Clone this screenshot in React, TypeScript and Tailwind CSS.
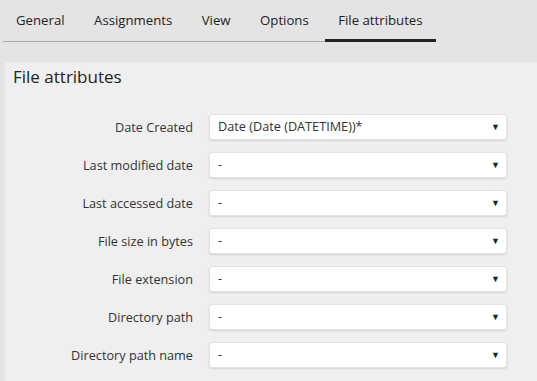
import React from "react";

const tabs = ["General", "Assignments", "View", "Options", "File attributes"];
const rows: [string, string][] = [
  ["Date Created", "Date (Date (DATETIME))*"],
  ["Last modified date", "-"],
  ["Last accessed date", "-"],
  ["File size in bytes", "-"],
  ["File extension", "-"],
  ["Directory path", "-"],
  ["Directory path name", "-"],
];

export default function App() {
  return (
    <div
      className="w-full h-[381px] bg-[#e4e4e4] overflow-hidden text-[#333] flex flex-col"
      style={{ fontFamily: '"Open Sans", sans-serif' }}
    >
      <div className="flex gap-[3.5px] ml-[3px] self-start h-[42px] border-b border-[#aaa]">
        {tabs.map((t, i) => (
          <div
            key={t}
            className={
              "flex items-center px-[13px] text-[13.2px] text-[#222] " +
              (i === tabs.length - 1
                ? "h-[42px] pt-[3px] border-b-[3px] border-[#222]"
                : "h-[41px] pt-[1px]")
            }
          >
            {t}
          </div>
        ))}
      </div>
      <div className="mt-[20px] ml-[5px] flex-1 bg-[#efefef] rounded-tl-[3px] pt-[4px]">
        <div className="pl-[8px] text-[17px] leading-[22px] text-[#222]">File attributes</div>
        <div className="mt-[26px] flex flex-col gap-[12px]">
          {rows.map(([label, value]) => (
            <div key={label} className="flex items-center">
              <div className="w-[188px] text-right text-[12.7px] leading-[26px]">{label}</div>
              <div className="ml-[16px] w-[298px] h-[26px] bg-white rounded-[3px] border border-[#e2e2e2] shadow-[0_1px_2px_rgba(0,0,0,0.12)] flex items-center justify-between pl-[8px] pr-[6px] text-[12.7px]">
                <span>{value}</span>
                <span className="text-[9px] text-[#222]">▼</span>
              </div>
            </div>
          ))}
        </div>
      </div>
    </div>
  );
}
